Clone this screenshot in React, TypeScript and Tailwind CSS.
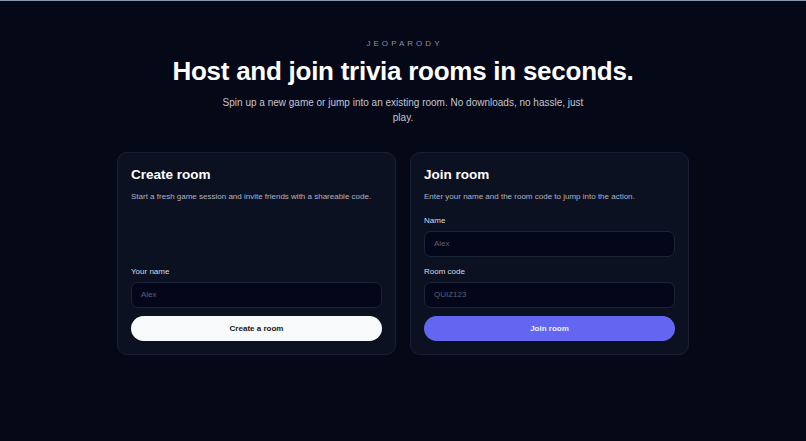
import React from "react";

function Field({ label, placeholder, className = "" }: { label: string; placeholder: string; className?: string }) {
  return (
    <div className={"flex flex-col " + className}>
      <label className="text-[8px] leading-[10px] text-[#d5d9e2]">{label}</label>
      <div className="mt-[5px] h-[26px] rounded-[7px] border border-[#1e2438] bg-[#04061a] px-[9px] flex items-center">
        <span className="text-[8px] text-[#5b6172]">{placeholder}</span>
      </div>
    </div>
  );
}

export default function App() {
  return (
    <div
      className="min-h-[441px] w-full bg-[#050816] border-t border-[#8797ad] flex flex-col items-center"
      style={{ fontFamily: '"Liberation Sans", Arial, sans-serif' }}
    >
      <div className="mt-[38px] text-[8px] leading-[10px] tracking-[0.38em] text-[#8b90a0] pl-[0.38em]">JEOPARODY</div>
      <h1 className="mt-[7px] text-[26px] leading-[30px] font-bold text-white tracking-[-0.01em]">
        Host and join trivia rooms in seconds.
      </h1>
      <p className="mt-[9px] max-w-[370px] text-center text-[10px] leading-[15px] text-[#c3c7d2]">
        Spin up a new game or jump into an existing room. No downloads, no hassle, just play.
      </p>
      <div className="mt-[27px] grid grid-cols-2 gap-[14px] w-[572px]">
        <div className="rounded-[10px] border border-[#1a2034] bg-[#0c1122] px-[13px] pt-[14px] pb-[13px] flex flex-col h-[203px]">
          <h2 className="text-[13.5px] leading-[16px] font-bold text-white">Create room</h2>
          <p className="mt-[9px] text-[8px] leading-[10px] text-[#aeb3c0]">
            Start a fresh game session and invite friends with a shareable code.
          </p>
          <Field label="Your name" placeholder="Alex" className="mt-auto" />
          <button className="mt-[8px] h-[25px] rounded-full bg-[#f8f9fb] text-[8px] font-bold text-[#141824]">
            Create a room
          </button>
        </div>
        <div className="rounded-[10px] border border-[#1a2034] bg-[#0c1122] px-[13px] pt-[14px] pb-[13px] flex flex-col h-[203px]">
          <h2 className="text-[13.5px] leading-[16px] font-bold text-white">Join room</h2>
          <p className="mt-[9px] text-[8px] leading-[10px] text-[#aeb3c0]">
            Enter your name and the room code to jump into the action.
          </p>
          <Field label="Name" placeholder="Alex" className="mt-[14px]" />
          <Field label="Room code" placeholder="QUIZ123" className="mt-[10px]" />
          <button className="mt-[8px] h-[25px] rounded-full bg-[#6366f1] text-[8px] font-bold text-[#eef0ff]">
            Join room
          </button>
        </div>
      </div>
    </div>
  );
}
